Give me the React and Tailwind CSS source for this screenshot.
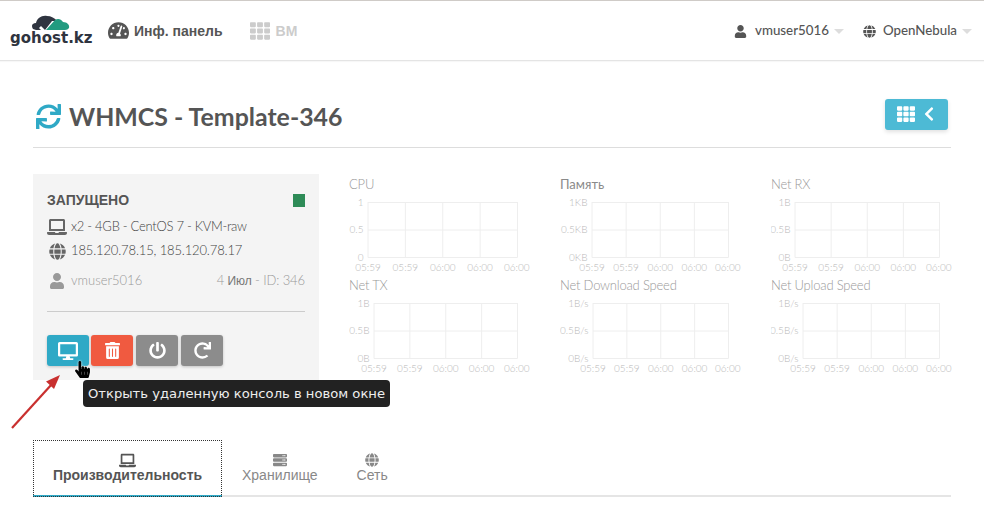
import React from 'react';
import {
  FaTachometerAlt, FaTh, FaUser, FaGlobe, FaSync, FaLaptop, FaDesktop,
  FaTrashAlt, FaPowerOff, FaRedo, FaServer, FaChevronLeft, FaHandPointer,
} from 'react-icons/fa';

const charts = [
  { title: 'CPU', left: 19, ticks: ['1', '0.5', '0'] },
  { title: 'Память', left: 32, ticks: ['1KB', '0.5KB', '0KB'], dark: true },
  { title: 'Net RX', left: 24, ticks: ['1B', '0.5B', '0B'] },
  { title: 'Net TX', left: 25, ticks: ['1B', '0.5B', '0B'] },
  { title: 'Net Download Speed', left: 33, ticks: ['1B/s', '0.5B/s', '0B/s'] },
  { title: 'Net Upload Speed', left: 32, ticks: ['1B/s', '0.5B/s', '0B/s'] },
];
const times = ['05:59', '05:59', '06:00', '06:00', '06:00'];

function Chart({ title, left, ticks, dark }) {
  const right = 168.5;
  const xs = [0, 1, 2, 3, 4].map((i) => left + (i * (right - left)) / 4);
  return (
    <div className="h-[101px]">
      <div className={`h-5 text-[13px] leading-5 ${dark ? 'text-[#8a8a8a]' : 'font-light tracking-[-0.2px] text-[#999]'}`}>{title}</div>
      <svg width="181" height="81" className="block font-light" fill="#b8b8b8" fontSize="10">
        {xs.map((x, i) => (
          <line key={i} x1={x} x2={x} y1="8" y2="63.5" stroke="#eee" />
        ))}
        {[8.5, 36, 63.5].map((y, i) => (
          <React.Fragment key={y}>
            <line x1={left} x2={right} y1={y} y2={y} stroke="#eee" />
            <text x={left - 4.5} y={y + 3} textAnchor="end">{ticks[i]}</text>
          </React.Fragment>
        ))}
        {xs.map((x, i) => (
          <text key={i} x={i === 4 ? 180.5 : x} y="77" textAnchor={i === 4 ? 'end' : 'middle'}>{times[i]}</text>
        ))}
      </svg>
    </div>
  );
}

function ActionButton({ className, children }) {
  return (
    <div className={`flex h-[31px] w-[42px] items-center justify-center rounded-[3px] text-white shadow-[0_1px_3px_rgba(0,0,0,0.2)] ${className}`}>
      {children}
    </div>
  );
}

export default function App() {
  return (
    <div className="relative min-h-screen overflow-hidden border-t border-[#cfcbc7] bg-white font-['Lato','Liberation_Sans',sans-serif] text-[#555]">
      {/* top bar */}
      <nav className="flex h-[60px] items-center border-b border-[#e4e4e4] pr-[12px] pl-[10px] shadow-[0_1px_1px_rgba(0,0,0,0.03)]">
        <div className="w-[98px] shrink-0">
          <svg width="38" height="16" viewBox="0 0 38 16" className="ml-[22px] block">
            <path d="M1 14C-1 11 0 8 4 8C5 3 10 0 15 1C19 1 23 3 25 6L20 6L13 15L9 11L7 13L9 15L4 15Z" fill="#2f3440" />
            <path d="M14 15L23 5C26 3 29 4 31 7C35 7 38 10 37 13C36 14 35 15 33 15Z" fill="#229b80" />
          </svg>
          <div className="-mt-[1px] text-[15px] leading-[17px] font-bold text-[#2f3440] font-['DejaVu_Sans',sans-serif]">gohost.kz</div>
        </div>
        <FaTachometerAlt size={21} className="text-[#555]" />
        <span className="ml-[5px] text-sm font-bold font-['Liberation_Sans',sans-serif]">Инф. панель</span>
        <FaTh size={20} className="ml-[27px] text-[#ccc]" />
        <span className="ml-[6px] text-sm font-bold text-[#ccc] font-['Liberation_Sans',sans-serif]">ВМ</span>
        <div className="mt-[1px] ml-auto flex items-center text-[13.3px] font-medium">
          <FaUser size={13} />
          <span className="ml-[8px]">vmuser5016</span>
          <span className="mt-[1px] ml-[5px] border-x-[5px] border-t-[5px] border-x-transparent border-t-[#ddd]" />
          <FaGlobe size={13} className="ml-[19px]" />
          <span className="ml-[7px]">OpenNebula</span>
          <span className="mt-[1px] ml-[5px] border-x-[5px] border-t-[5px] border-x-transparent border-t-[#ddd]" />
        </div>
      </nav>

      <main className="relative mr-[33px] ml-[33px]">
        {/* title */}
        <div className="flex h-[87px] items-center border-b border-[#ddd] pt-[26px] pb-[2px]">
          <FaSync size={25} className="ml-[3px] text-[#2fa9c6]" />
          <h1 className="mt-[2px] ml-[8px] text-[24.9px] font-bold text-[#555]">WHMCS - Template-346</h1>
          <div className="mr-[3px] mb-[4px] ml-auto flex h-[31px] w-[63px] items-center justify-center gap-[6px] rounded-[3px] bg-[#4dbad5] text-white shadow-[0_2px_4px_rgba(0,0,0,0.12)]">
            <FaTh size={18} />
            <FaChevronLeft size={16} />
          </div>
        </div>

        <div className="mt-[26px] flex">
          {/* vm card */}
          <div className="relative h-[206px] w-[286px] shrink-0 bg-[#f4f4f4] px-[14px] pt-[17px]">
            <div className="flex h-[18px] items-center justify-between">
              <span className="text-sm font-bold font-['Liberation_Sans',sans-serif]">ЗАПУЩЕНО</span>
              <span className="h-[13px] w-[12px] bg-[#2e8b57]" />
            </div>
            <div className="mt-[8px] flex h-[20px] items-center text-[13px] font-light tracking-[-0.28px] text-[#444]">
              <FaLaptop size={20} className="text-[#666]" />
              <span className="ml-[4px]">x2 - 4GB - CentOS 7 - KVM-raw</span>
            </div>
            <div className="mt-[4px] flex h-[20px] items-center text-[13px] font-light tracking-[-0.15px] text-[#444]">
              <FaGlobe size={17} className="ml-[2px] text-[#666]" />
              <span className="ml-[5px]">185.120.78.15, 185.120.78.17</span>
            </div>
            <div className="mt-[10px] flex h-[20px] items-center text-[13px] font-light text-[#999]">
              <FaUser size={16} className="ml-[2px] text-[#999]" />
              <span className="ml-[6px]">vmuser5016</span>
              <span className="ml-auto tracking-[-0.1px]">4 <span className="font-['Liberation_Sans',sans-serif] text-[12px] text-[#777]">Июл</span> - ID: 346</span>
            </div>
            <div className="mt-[20px] border-t border-[#ccc]" />
            <div className="mt-[23px] flex gap-[2px]">
              <ActionButton className="bg-[#2fa9c6]"><FaDesktop size={20} /></ActionButton>
              <ActionButton className="bg-[#f05a40]"><FaTrashAlt size={17} /></ActionButton>
              <ActionButton className="ml-[1px] bg-[#8c8c8c]"><FaPowerOff size={17} /></ActionButton>
              <ActionButton className="ml-[1px] bg-[#8c8c8c]"><FaRedo size={17} /></ActionButton>
            </div>
            {/* tooltip and pointer over the card */}
            <div className="absolute top-[206px] left-[50px] z-10 flex h-[27px] w-[307px] items-center justify-center rounded-[4px] bg-[#222] text-[13.15px] whitespace-nowrap text-[#eee] font-['DejaVu_Sans',sans-serif]">
              Открыть удаленную консоль в новом окне
            </div>
            <FaHandPointer size={17} className="absolute top-[187px] left-[41px] z-20 text-black drop-shadow-[0_0_1px_rgba(255,255,255,1)]" />
          </div>

          {/* charts */}
          <div className="ml-[30px] grid w-[602px] grid-cols-3 gap-x-[31px] self-start">
            {charts.map((c) => <Chart key={c.title} {...c} />)}
          </div>
        </div>

        {/* tabs */}
        <div className="mt-[60px] flex h-[57px] border-b-2 border-[#e5e5e5] text-sm font-['Liberation_Sans',sans-serif]">
          <div className="-mb-[2px] flex w-[189px] flex-col items-center border-b-2 border-[#2fa9c6] pt-[12px] font-bold outline-1 -outline-offset-1 outline-dotted outline-[#333]">
            <FaLaptop size={17} />
            <span className="-mt-[3px] leading-[18px]">Производительность</span>
          </div>
          <div className="flex flex-col items-center px-[20px] pt-[13px] text-[#888]">
            <FaServer size={14} />
            <span className="-mt-[1px] leading-[19px]">Хранилище</span>
          </div>
          <div className="flex flex-col items-center pr-[20px] pl-[19px] pt-[13px] text-[#888]">
            <FaGlobe size={14} />
            <span className="-mt-[1px] leading-[19px]">Сеть</span>
          </div>
        </div>
      </main>

      {/* annotation arrow */}
      <svg width="70" height="70" className="absolute top-[365px] left-0 z-10">
        <line x1="12" y1="62" x2="52" y2="18" stroke="#c9302f" strokeWidth="2.2" />
        <path d="M60 9 L54 23 L46 15.5 Z" fill="#c9302f" />
      </svg>
    </div>
  );
}
